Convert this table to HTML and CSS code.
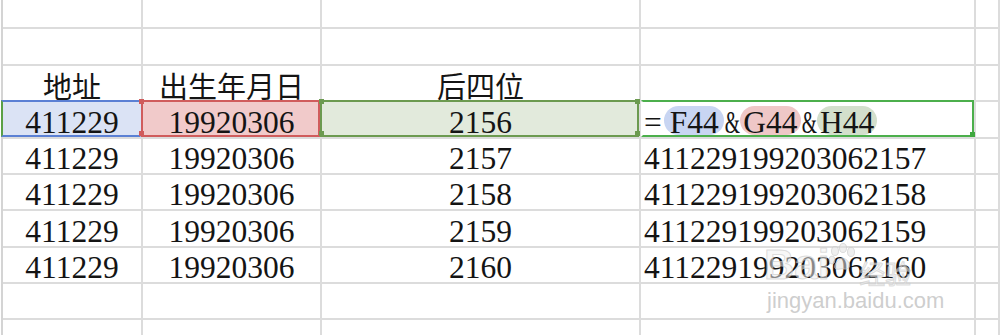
FILE: index.html
```html
<!DOCTYPE html>
<html lang="zh">
<head>
<meta charset="utf-8">
<title>Sheet</title>
<link rel="stylesheet" href="styles.css">
</head>
<body>
<div class="sheet">
  <div class="c"></div><div class="c"></div><div class="c"></div><div class="c"></div><div class="c"></div>
  <div class="c"></div><div class="c"></div><div class="c"></div><div class="c"></div><div class="c"></div>

  <div class="c hd"><span class="t">地址</span></div>
  <div class="c hd"><span class="t">出生年月日</span></div>
  <div class="c hd"><span class="t">后四位</span></div>
  <div class="c"></div><div class="c"></div>

  <div class="c sel sel-blue"><span class="t">411229</span></div>
  <div class="c sel sel-red"><span class="t">19920306</span><i class="hdl red tl"></i><i class="hdl red bl"></i></div>
  <div class="c sel sel-green"><span class="t">2156</span><i class="hdl grn tl"></i><i class="hdl grn bl"></i><i class="hdl grn tr"></i><i class="hdl grn br"></i></div>
  <div class="c l sel sel-formula"><span class="t"><span class="eq">=</span><span class="pill p-blue">F44</span><span class="amp">&amp;</span><span class="pill p-red">G44</span><span class="amp">&amp;</span><span class="pill p-green">H44</span></span><i class="hdl fml br"></i></div>
  <div class="c"></div>

  <div class="c"><span class="t">411229</span></div>
  <div class="c"><span class="t">19920306</span></div>
  <div class="c"><span class="t">2157</span></div>
  <div class="c l"><span class="t">411229199203062157</span></div>
  <div class="c"></div>

  <div class="c"><span class="t">411229</span></div>
  <div class="c"><span class="t">19920306</span></div>
  <div class="c"><span class="t">2158</span></div>
  <div class="c l"><span class="t">411229199203062158</span></div>
  <div class="c"></div>

  <div class="c"><span class="t">411229</span></div>
  <div class="c"><span class="t">19920306</span></div>
  <div class="c"><span class="t">2159</span></div>
  <div class="c l"><span class="t">411229199203062159</span></div>
  <div class="c"></div>

  <div class="c"><span class="t">411229</span></div>
  <div class="c"><span class="t">19920306</span></div>
  <div class="c"><span class="t">2160</span></div>
  <div class="c l"><span class="t">411229199203062160</span></div>
  <div class="c"></div>

  <div class="c"></div><div class="c"></div><div class="c"></div><div class="c"></div><div class="c"></div>
  <div class="c last"></div><div class="c last"></div><div class="c last"></div><div class="c last"></div><div class="c last"></div>
</div>

<div class="watermark">
  <div class="wm-logo"><span class="wm-bai">Bai</span><svg class="wm-paw" width="30" height="30" viewBox="0 0 30 30"><g fill="rgba(225,225,225,0.55)" stroke="rgba(200,200,200,0.6)" stroke-width="1"><ellipse cx="8" cy="9" rx="3.5" ry="4.5"/><ellipse cx="16" cy="6" rx="3.5" ry="4.5"/><ellipse cx="24" cy="10" rx="3.5" ry="4.5"/><ellipse cx="5" cy="18" rx="3" ry="4"/><path d="M9 27 C6 26 8 20 13 17 C16 15 20 17 22 21 C24 25 21 28 17 27 C14 26 12 28 9 27 Z"/></g></svg><span class="wm-cn">经验</span></div>
  <div class="wm-url">jingyan.baidu.com</div>
</div>
</body>
</html>
```

FILE: styles.css
```css
html, body {
  margin: 0;
  padding: 0;
  background: #ffffff;
  overflow: hidden;
}

body {
  font-family: "Liberation Serif", "Noto Sans CJK SC", serif;
  color: #141414;
  width: 1000px;
  height: 335px;
  position: relative;
}

.sheet {
  margin-left: 1px;
  border-left: 2px solid #d4d4d4;
  display: grid;
  grid-template-columns: 140px 179px 319px 335px 1fr;
  grid-template-rows: 29px 37px 36px 37px 36px 36px 37px 36px 36px 15px;
  height: 335px;
  box-sizing: border-box;
}

.c {
  box-sizing: border-box;
  border-right: 2px solid #dcdcdc;
  border-bottom: 2px solid #dcdcdc;
  display: flex;
  align-items: flex-end;
  justify-content: center;
  position: relative;
  font-size: 31.5px;
  line-height: 1;
}

.c.last {
  border-bottom: none;
}

.c.l {
  justify-content: flex-start;
  padding-left: 3px;
}

.t {
  display: block;
  margin-bottom: -1px;
  white-space: nowrap;
}

.hd .t {
  font-family: "Noto Sans CJK SC", sans-serif;
  font-size: 29px;
  font-weight: 400;
  line-height: 1;
  margin-bottom: 0;
}

/* selected row */
.sel::before {
  content: "";
  position: absolute;
  top: -2px;
  left: -2px;
  right: 0;
  bottom: 0;
  border: 2px solid transparent;
}

.sel-blue { background: #dbe3f5; }
.sel-blue::before {
  border-color: #5b80d4;
  border-left-color: #5aa046;
  border-right-color: transparent;
}

.sel-red { background: #f1caca; }
.sel-red::before { border-color: #d05c5c; }

.sel-green { background: #e2eadc; }
.sel-green::before { border-color: #6c9a50; }

.sel-formula { background: #ffffff; }
.sel-formula::before {
  left: 0;
  border-color: #4caf4c;
  border-left-color: transparent;
}

.hdl {
  position: absolute;
  width: 5px;
  height: 5px;
}
.hdl.red { background: #d05c5c; }
.hdl.grn { background: #6c9a50; }
.hdl.fml { background: #3fa83f; }
.hdl.tl { left: -4px; top: -3px; }
.hdl.bl { left: -4px; bottom: 1px; }
.hdl.tr { right: -1px; top: -3px; }
.hdl.br { right: -1px; bottom: 1px; }
.hdl.fml.br { right: -1px; bottom: 0; }

.sel-green .hdl.tl, .sel-green .hdl.bl { left: -3px; }

/* formula */
.eq {
  display: inline-block;
  margin-right: 2px;
}

.pill {
  display: inline-block;
  height: 29px;
  line-height: 33px;
  border-radius: 15px;
  vertical-align: baseline;
}
.p-blue { background: #c8d5f2; padding: 0 5px 0 6px; }
.p-red { background: #efc7c7; padding: 0 3px; }
.p-green { background: #d3dfcc; padding: 0 3px; }

.amp {
  display: inline-block;
  transform: scaleX(0.62);
  margin: 0 -4px;
}

/* watermark */
.watermark {
  position: absolute;
  left: 764px;
  top: 240px;
  width: 190px;
  height: 80px;
  pointer-events: none;
}

.wm-logo {
  display: flex;
  align-items: flex-end;
  height: 46px;
}

.wm-bai {
  font-family: "Liberation Sans", sans-serif;
  font-weight: 700;
  font-size: 42px;
  line-height: 1;
  color: rgba(240, 240, 240, 0.55);
  -webkit-text-stroke: 1px rgba(195, 195, 195, 0.55);
}

.wm-paw {
  margin: 0 0 14px -2px;
}

.wm-cn {
  font-family: "Noto Sans CJK SC", sans-serif;
  font-size: 26px;
  line-height: 1;
  margin-left: 2px;
  color: rgba(240, 240, 240, 0.55);
  -webkit-text-stroke: 1px rgba(195, 195, 195, 0.55);
}

.wm-url {
  font-family: "Liberation Sans", sans-serif;
  font-size: 22px;
  line-height: 1;
  margin-top: 4px;
  margin-left: 3px;
  color: rgba(200, 200, 200, 0.9);
  text-shadow: 0 0 2px #fff, 1px 1px 0 #fff, -1px -1px 0 #fff;
}
```
